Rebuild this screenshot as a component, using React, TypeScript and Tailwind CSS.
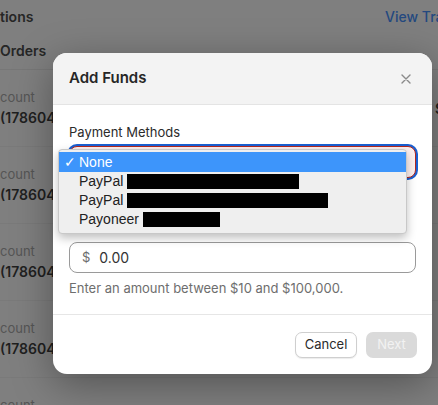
import React from "react";

const rows = [0, 1, 2, 3, 4];

const menuItems = [
  { label: "PayPal", redact: "w-[172px]" },
  { label: "PayPal", redact: "w-[201px]" },
  { label: "Payoneer", redact: "w-[77px]" },
];

export default function App() {
  return (
    <div
      className="relative w-[438px] h-[405px] overflow-hidden bg-[#7f7f7f]"
      style={{ fontFamily: "Inter, 'Liberation Sans', sans-serif" }}
    >
      {/* page behind the dim overlay */}
      <div className="flex flex-col">
        <div className="flex h-[32px] items-center whitespace-nowrap">
          <span className="w-[385px] shrink-0 text-[14px] font-semibold text-[#262626]">tions</span>
          <span className="shrink-0 text-[14px] font-medium text-[#24497f]">View Transactions</span>
        </div>
        <div className="flex h-[38px] items-center border-b border-[#777777] text-[14px] font-semibold text-[#262626]">
          Orders
        </div>
        {rows.map((r) => (
          <div key={r} className="flex h-[77px] justify-between border-b border-[#7a7a7a] pt-[18px]">
            <div className="flex flex-col">
              <span className="h-[18px] text-[13px] leading-[18px] text-[#555555]">count</span>
              <span className="mt-[3px] h-[18px] text-[14px] font-semibold leading-[18px] text-[#1f1f1f]">
                (178604
              </span>
            </div>
            {r === 0 && (
              <span className="mt-[10px] -mr-[6px] text-[14px] font-semibold text-[#1f1f1f]">$</span>
            )}
          </div>
        ))}
      </div>

      {/* modal */}
      <div className="absolute left-[53px] top-[53px] flex h-[321px] w-[379px] flex-col overflow-hidden rounded-[14px] bg-white shadow-[0_10px_40px_rgba(0,0,0,0.35)]">
        <div className="flex h-[52px] shrink-0 items-center justify-between border-b border-[#e4e4e4] bg-[#f3f3f3] px-[16px]">
          <span className="text-[15px] font-semibold text-[#262626]">Add Funds</span>
          <svg width="10" height="10" viewBox="0 0 10 10" className="mr-[5px]">
            <path d="M1 1L9 9M9 1L1 9" stroke="#8a8a8a" strokeWidth="1.4" strokeLinecap="round" />
          </svg>
        </div>

        <div className="flex flex-1 flex-col px-[16px] pt-[18px]">
          <span className="h-[18px] text-[13px] leading-[18px] text-[#2b2b2b]">Payment Methods</span>
          <div className="mt-[5px] h-[32px] rounded-[8px] border border-[#b3261e] bg-[#fcefee] ring-2 ring-[#1a5fd0]" />

          <span className="mt-[41px] h-[18px] text-[13px] leading-[18px] text-[#2b2b2b]">Amount</span>
          <div className="mt-[5px] flex h-[31px] items-center gap-[9px] rounded-[8px] border border-[#9a9a9a] px-[12px]">
            <span className="text-[13px] text-[#6b6b6b]">$</span>
            <span className="text-[14px] text-[#333333]">0.00</span>
          </div>
          <span className="mt-[6px] text-[13px] leading-[18px] text-[#6e6e6e]">
            Enter an amount between $10 and $100,000.
          </span>
        </div>

        <div className="flex h-[60px] shrink-0 items-center justify-end gap-[9px] border-t border-[#e6e6e6] px-[15px]">
          <button className="h-[26px] w-[62px] rounded-[7px] border border-[#cfcfcf] bg-white text-[13px] text-[#2b2b2b] shadow-[0_1px_1px_rgba(0,0,0,0.08)]">
            Cancel
          </button>
          <button className="h-[26px] w-[51px] rounded-[7px] bg-[#dadada] text-[13px] text-[#f2f2f2]">
            Next
          </button>
        </div>
      </div>

      {/* native select menu */}
      <div
        className="absolute left-[58px] top-[149px] flex w-[349px] flex-col rounded-[4px] border border-[#c8c8c8] bg-[#efefef] pb-[4px] pt-[2px] shadow-[0_4px_10px_rgba(0,0,0,0.25)]"
        style={{ fontFamily: "'Liberation Sans', Arial, sans-serif" }}
      >
        <div className="flex h-[20px] items-center bg-[#3d95fb] text-[14px] text-white">
          <span className="w-[20px] pl-[5px] text-[14px]">✓</span>
          <span>None</span>
        </div>
        {menuItems.map((m, i) => (
          <div key={i} className="flex h-[19px] items-center pl-[20px] text-[14px] text-[#222222]">
            <span>{m.label}</span>
            <span className={`ml-[4px] h-[15px] bg-black ${m.redact}`} />
          </div>
        ))}
      </div>
    </div>
  );
}
